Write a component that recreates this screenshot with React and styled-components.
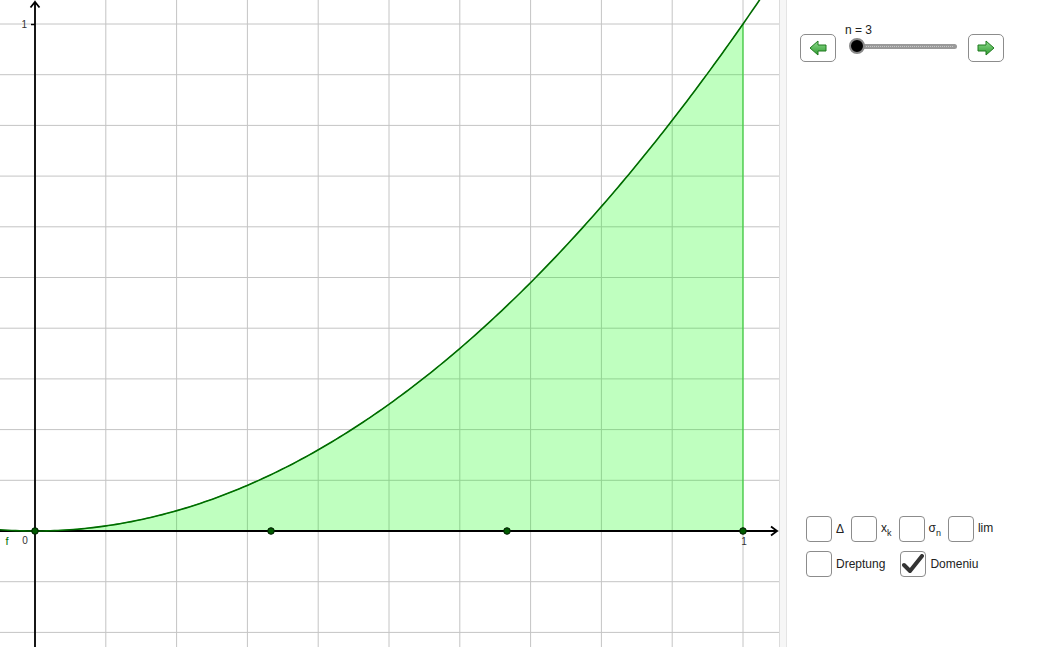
import React from "react";
import styled, { createGlobalStyle } from "styled-components";

const Global = createGlobalStyle`
  html, body { margin: 0; padding: 0; background: #fff; }
  body { font-family: "Liberation Sans", Arial, sans-serif; overflow: hidden; }
`;

const Page = styled.div`
  display: flex;
  width: 1040px;
  height: 647px;
  background: #fff;
`;

const Graphics = styled.div`
  width: 779px;
  height: 647px;
  flex: none;
  overflow: hidden;
`;

const Splitter = styled.div`
  width: 6px;
  height: 647px;
  flex: none;
  background: #f6f6f6;
  border-left: 1px solid #dcdcdc;
  border-right: 1px solid #e4e4e4;
`;

const Panel = styled.div`
  flex: 1;
  display: flex;
  flex-direction: column;
  padding: 23px 0 70px 13px;
  box-sizing: border-box;
  height: 647px;
`;

const SliderRow = styled.div`
  display: flex;
  align-items: flex-end;
`;

const ArrowButton = styled.button`
  width: 36px;
  height: 28px;
  box-sizing: border-box;
  border: 1.5px solid #8c8c8c;
  border-radius: 5px;
  background: #fff;
  padding: 0;
  display: flex;
  align-items: center;
  justify-content: center;
`;

const SliderBlock = styled.div`
  width: 132px;
  display: flex;
  flex-direction: column;
  position: relative;
  height: 39px;
`;

const SliderLabel = styled.div`
  font-size: 12px;
  color: #222;
  margin-left: 9px;
  line-height: 14px;
`;

const Track = styled.div`
  position: relative;
  margin: 7px 0 0 21px;
  width: 100px;
  height: 5px;
  background: #9a9a9a;
  border-radius: 3px;
  &::after {
    content: "";
    position: absolute;
    left: 4px;
    right: 4px;
    top: 2px;
    border-top: 1px dotted #c8c8c8;
  }
`;

const Knob = styled.div`
  position: absolute;
  left: -8px;
  top: -6px;
  width: 12px;
  height: 12px;
  border-radius: 50%;
  background: #000;
  border: 2.5px solid #8a8a8a;
  z-index: 1;
`;

const Checks = styled.div`
  margin-top: auto;
  display: flex;
  flex-direction: column;
  gap: 9px;
`;

const CheckRow = styled.div`
  display: flex;
  align-items: center;
  gap: ${(p) => p.$gap}px;
  margin-left: ${(p) => p.$indent}px;
`;

const CheckItem = styled.label`
  display: flex;
  align-items: center;
  gap: 4px;
  font-size: 12px;
  color: #222;
`;

const Box = styled.span`
  width: 26px;
  height: 26px;
  box-sizing: border-box;
  border: 1.5px solid #8c8c8c;
  border-radius: 4px;
  background: #fff;
  display: flex;
  align-items: center;
  justify-content: center;
`;

const Label = styled.span`
  position: relative;
  top: ${(p) => p.$dy || 0}px;
  line-height: 14px;
  color: #222;
`;

const Sub = styled.sub`
  font-size: 9px;
  vertical-align: -4px;
  color: #222;
`;

const Arrow = ({ dir }) => (
  <svg width="20" height="16" viewBox="0 0 20 16">
    <defs>
      <linearGradient id={"g" + dir} x1="0" y1="0" x2="0" y2="1">
        <stop offset="0" stopColor="#8fdc8f" />
        <stop offset="1" stopColor="#2f9a2f" />
      </linearGradient>
    </defs>
    <path
      d={
        dir === "l"
          ? "M2 8 L10 1 L10 5 L18 5 L18 11 L10 11 L10 15 Z"
          : "M18 8 L10 1 L10 5 L2 5 L2 11 L10 11 L10 15 Z"
      }
      fill={`url(#g${dir})`}
      stroke="#1f7a1f"
      strokeWidth="1"
      strokeLinejoin="round"
    />
  </svg>
);

const OX = 35;
const OY = 531;
const SX = 708;
const SY = 507;
const px = (x) => OX + x * SX;
const py = (y) => OY - y * SY;

function curvePts(a, b, n) {
  const pts = [];
  for (let i = 0; i <= n; i++) {
    const x = a + ((b - a) * i) / n;
    pts.push([px(x), py(x * x)]);
  }
  return pts;
}

const FONT = "Liberation Sans, Arial, sans-serif";

function Graph() {
  const vLines = [];
  for (let k = 0; k <= 10; k++) vLines.push(OX + k * 70.8);
  const hLines = [];
  for (let k = -2; k <= 10; k++) hLines.push(OY - k * 50.7);
  const curve = curvePts(-0.06, 1.03, 200)
    .map((p, i) => (i ? "L" : "M") + p[0].toFixed(2) + " " + p[1].toFixed(2))
    .join(" ");
  const area =
    curvePts(0, 1, 150)
      .map((p, i) => (i ? "L" : "M") + p[0].toFixed(2) + " " + p[1].toFixed(2))
      .join(" ") + ` L${px(1)} ${OY} Z`;
  return (
    <svg width="779" height="647" viewBox="0 0 779 647" style={{ display: "block" }}>
      <rect width="779" height="647" fill="#fff" />
      {vLines.map((x) => (
        <line key={"v" + x} x1={x} y1="0" x2={x} y2="647" stroke="#c4c4c4" strokeWidth="1" />
      ))}
      {hLines.map((y) => (
        <line key={"h" + y} x1="0" y1={y} x2="779" y2={y} stroke="#c4c4c4" strokeWidth="1" />
      ))}
      <path d={area} fill="rgba(0,255,0,0.25)" stroke="#22cc22" strokeWidth="1" />
      <line x1="0" y1={OY} x2="777" y2={OY} stroke="#000" strokeWidth="1.8" />
      <polyline points="771,526.5 777,531 771,535.5" fill="none" stroke="#000" strokeWidth="1.8" />
      <line x1={OX} y1="2" x2={OX} y2="647" stroke="#000" strokeWidth="1.8" />
      <polyline points="30.5,7.5 35,2 39.5,7.5" fill="none" stroke="#000" strokeWidth="1.8" />
      <line x1="31" y1="24.5" x2="35" y2="24.5" stroke="#000" strokeWidth="1.5" />
      <path d={curve} fill="none" stroke="#006a00" strokeWidth="1.6" />
      {[0, 1 / 3, 2 / 3, 1].map((x) => (
        <circle key={x} cx={px(x)} cy={OY} r="3.3" fill="#005a00" stroke="#001a00" strokeWidth="1" />
      ))}
      <text x="27" y="28" fontSize="10" fill="#333" textAnchor="end" fontFamily={FONT}>1</text>
      <text x="25" y="544" fontSize="10" fill="#333" textAnchor="middle" fontFamily={FONT}>0</text>
      <text x={px(1) + 1} y="545" fontSize="10" fill="#333" textAnchor="middle" fontFamily={FONT}>1</text>
      <text x="7" y="545" fontSize="11" fill="#007000" textAnchor="middle" fontFamily={FONT}>f</text>
    </svg>
  );
}

const Check = () => (
  <svg width="22" height="20" viewBox="0 0 22 20">
    <path d="M2 11 L8 17 L20 2" fill="none" stroke="#333" strokeWidth="4" strokeLinecap="round" strokeLinejoin="round" />
  </svg>
);

export default function App() {
  return (
    <>
      <Global />
      <Page>
        <Graphics>
          <Graph />
        </Graphics>
        <Splitter />
        <Panel>
          <SliderRow>
            <ArrowButton>
              <Arrow dir="l" />
            </ArrowButton>
            <SliderBlock>
              <SliderLabel>n = 3</SliderLabel>
              <Track>
                <Knob />
              </Track>
            </SliderBlock>
            <ArrowButton>
              <Arrow dir="r" />
            </ArrowButton>
          </SliderRow>
          <Checks>
            <CheckRow $gap={7} $indent={6}>
              <CheckItem>
                <Box />
                <Label>Δ</Label>
              </CheckItem>
              <CheckItem>
                <Box />
                <Label $dy={1}>
                  x<Sub>k</Sub>
                </Label>
              </CheckItem>
              <CheckItem>
                <Box />
                <Label $dy={1}>
                  σ<Sub>n</Sub>
                </Label>
              </CheckItem>
              <CheckItem>
                <Box />
                <Label $dy={-1}>lim</Label>
              </CheckItem>
            </CheckRow>
            <CheckRow $gap={15} $indent={6}>
              <CheckItem>
                <Box />
                <Label>Dreptung</Label>
              </CheckItem>
              <CheckItem>
                <Box>
                  <Check />
                </Box>
                <Label>Domeniu</Label>
              </CheckItem>
            </CheckRow>
          </Checks>
        </Panel>
      </Page>
    </>
  );
}
